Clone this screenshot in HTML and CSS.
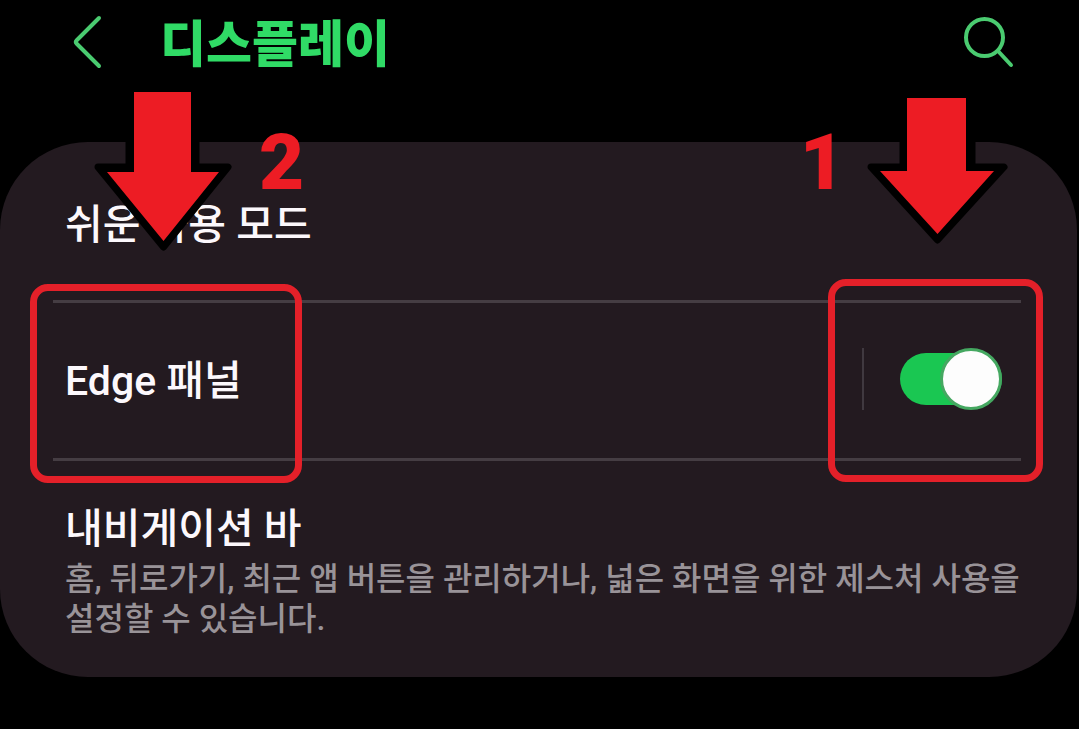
FILE: index.html
```html
<!DOCTYPE html>
<html lang="ko">
<head>
<meta charset="utf-8">
<meta name="viewport" content="width=device-width, initial-scale=1">
<title>디스플레이</title>
<link rel="stylesheet" href="styles.css">
</head>
<body>
<header class="topbar">
  <button class="icon-button" type="button" aria-label="뒤로">
    <svg width="32" height="56" viewBox="0 0 32 56"><path d="M27 4 4.500 26.500Q3 28 4.500 29.500L27 52" /></svg>
  </button>
  <h1 class="title">디스플레이</h1>
  <button class="icon-button" type="button" aria-label="검색">
    <svg width="56" height="56" viewBox="0 0 56 56"><circle cx="22.500" cy="23.500" r="18.500"/><path d="M36 37 49 51"/></svg>
  </button>
</header>
<main class="card">
  <a class="row row-first" href="#easy"><span class="name">쉬운 사용 모드</span></a>
  <div class="row divided">
    <label class="name" for="edge">Edge 패널</label>
    <span class="control"><input class="switch" id="edge" type="checkbox" role="switch" checked></span>
  </div>
  <a class="row row-tall divided" href="#navigation">
    <span class="name">내비게이션 바</span>
    <span class="description">홈, 뒤로가기, 최근 앱 버튼을 관리하거나, 넓은 화면을 위한 제스처 사용을 설정할 수 있습니다.</span>
  </a>
</main>
<div class="frame frame-left"></div>
<div class="frame frame-right"></div>
<svg class="arrow arrow-left" width="140" height="170" viewBox="0 0 140 170">
  <path class="outline" d="M36 8V82H5L70.500 162 135 82H103V8Z"/>
  <path class="fill" d="M41 7H98V87H126L70.500 156 14 87H41Z"/>
</svg>
<svg class="arrow arrow-right" width="144" height="160" viewBox="0 0 144 160">
  <path class="outline" d="M38 8V77H6L72.500 150 139 77H107V8Z"/>
  <path class="fill" d="M42 8H101V81H129L72.500 144 15 81H42Z"/>
</svg>
<span class="step step-left">2</span>
<span class="step step-right">1</span>
</body>
</html>
```
FILE: styles.css
```css
* { box-sizing: border-box; }
body {
  position: relative;
  margin: 0;
  min-height: 100vh;
  background: #000;
  color: #fcf8fc;
  font-family: Roboto, "Noto Sans CJK KR", sans-serif;
}
.topbar {
  display: flex;
  align-items: center;
  height: 84px;
  padding: 0 61px 0 72px;
}
.icon-button {
  display: flex;
  padding: 0;
  border: 0;
  background: none;
}
.icon-button svg {
  fill: none;
  stroke: #4acb70;
  stroke-width: 4;
  stroke-linecap: round;
}
.title {
  flex: 1;
  margin: 0 0 0 56px;
  padding-top: 6px;
  color: #30db66;
  font-size: 50px;
  line-height: 64px;
  font-weight: 900;
}
.card {
  margin: 58px 2px 0 0;
  padding: 0 56px 0 53px;
  border-radius: 88px;
  background: #231a20;
}
.row {
  display: flex;
  align-items: center;
  justify-content: space-between;
  min-height: 158px;
  padding: 0 13px 0 12px;
  color: inherit;
  text-decoration: none;
}
.row-first { padding-top: 8px; }
.divided { border-top: 3px solid #453d43; }
.row-tall {
  flex-direction: column;
  align-items: flex-start;
  justify-content: flex-start;
  padding: 38px 0 38px 12px;
}
.name {
  font-size: 41px;
  line-height: 60px;
  font-weight: 500;
}
.description {
  color: #999398;
  font-size: 32px;
  line-height: 40px;
  font-weight: 500;
}
.control {
  display: flex;
  align-items: center;
  height: 62px;
  margin-bottom: 4px;
  padding: 0 6px 0 36px;
  border-left: 2px solid #403940;
}
.switch {
  appearance: none;
  display: flex;
  align-items: center;
  justify-content: flex-end;
  width: 102px;
  height: 52px;
  margin: 0;
  border-radius: 26px;
  background: #1ac752;
}
.switch::before {
  content: "";
  flex: none;
  box-sizing: border-box;
  width: 62px;
  height: 62px;
  border: 3px solid #45a861;
  border-radius: 50%;
  background: #fdfdfd;
}
.frame {
  position: absolute;
  border: 7px solid #e42029;
  border-radius: 18px;
  pointer-events: none;
}
.frame-left { left: 30px; top: 284px; width: 272px; height: 199px; }
.frame-right { right: 36px; top: 279px; width: 215px; height: 203px; }
.arrow { position: absolute; pointer-events: none; }
.arrow-left { left: 93px; top: 85px; }
.arrow-right { right: 70px; top: 90px; }
.outline { fill: #000; stroke: #000; stroke-width: 7; stroke-linejoin: round; }
.fill { fill: #ed1c24; }
.step {
  position: absolute;
  top: 125px;
  color: #ed1c24;
  font-family: Roboto, sans-serif;
  font-size: 78px;
  line-height: 76px;
  font-weight: 900;
}
.step-left { left: 259px; }
.step-right { right: 234px; }
```
